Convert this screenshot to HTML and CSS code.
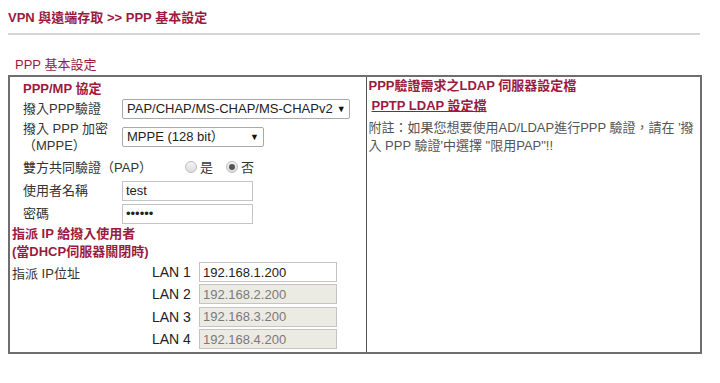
FILE: index.html
```html
<!DOCTYPE html>
<html lang="zh-TW">
<head>
  <meta charset="UTF-8">
  <title>PPP 基本設定</title>
  <link rel="stylesheet" href="styles.css">
</head>
<body>
  <div class="crumb">VPN 與遠端存取 &gt;&gt; PPP 基本設定</div>

  <div class="section-title">PPP 基本設定</div>

  <table class="panel">
    <tr>
      <td class="col-left">
        <div class="sub-title">PPP/MP 協定</div>
        <table class="form">
          <tr class="row-select">
            <td class="label">撥入PPP驗證</td>
            <td><div class="select select-wide">PAP/CHAP/MS-CHAP/MS-CHAPv2<span class="arrow">▼</span></div></td>
          </tr>
          <tr class="row-tall">
            <td class="label">撥入 PPP 加密<br>（MPPE）</td>
            <td><div class="select select-short">MPPE (128 bit）<span class="arrow">▼</span></div></td>
          </tr>
          <tr class="row-radio">
            <td class="label" colspan="2">
              <div class="radio-line">
                <span class="radio-label">雙方共同驗證（PAP）</span>
                <span class="radio"></span><span class="radio-text">是</span>
                <span class="radio checked"></span><span class="radio-text">否</span>
              </div>
            </td>
          </tr>
          <tr class="row-input">
            <td class="label">使用者名稱</td>
            <td><input class="text-input" type="text" value="test"></td>
          </tr>
          <tr class="row-input">
            <td class="label">密碼</td>
            <td><input class="text-input" type="password" value="123456"></td>
          </tr>
        </table>

        <div class="assign-title">指派 IP 給撥入使用者<br>(當DHCP伺服器關閉時)</div>

        <table class="lan">
          <tr>
            <td class="lan-label">指派 IP位址</td>
            <td class="lan-name">LAN 1</td>
            <td><input class="ip-input" type="text" value="192.168.1.200"></td>
          </tr>
          <tr>
            <td></td>
            <td class="lan-name">LAN 2</td>
            <td><input class="ip-input" type="text" value="192.168.2.200" disabled></td>
          </tr>
          <tr>
            <td></td>
            <td class="lan-name">LAN 3</td>
            <td><input class="ip-input" type="text" value="192.168.3.200" disabled></td>
          </tr>
          <tr>
            <td></td>
            <td class="lan-name">LAN 4</td>
            <td><input class="ip-input" type="text" value="192.168.4.200" disabled></td>
          </tr>
        </table>
      </td>
      <td class="col-right">
        <div class="ldap-title">PPP驗證需求之LDAP 伺服器設定檔</div>
        <a class="ldap-link" href="#">PPTP LDAP 設定檔</a>
        <p class="note">附註：如果您想要使用AD/LDAP進行PPP 驗證，請在 '撥入 PPP 驗證'中選擇 "限用PAP"!!</p>
      </td>
    </tr>
  </table>
</body>
</html>
```

FILE: styles.css
```css
* {
  margin: 0;
  padding: 0;
  box-sizing: border-box;
}

body {
  font-family: "Liberation Sans", "Noto Sans CJK TC", sans-serif;
  font-size: 13px;
  color: #333;
  background-color: #fff;
  padding: 0 8px;
}

.crumb {
  color: #9b1b3f;
  font-weight: bold;
  line-height: 18px;
  padding-top: 9px;
  padding-bottom: 6px;
  border-bottom: 2px solid #d6d6d6;
  margin-right: 12px;
}

.section-title {
  color: #9b1b3f;
  line-height: 16px;
  padding: 22px 0 2px 7px;
}

/* 外框表格 */
.panel {
  width: 694px;
  border-collapse: collapse;
  border: 2px solid #6e6e6e;
}

.panel td {
  vertical-align: top;
}

.col-left {
  width: 357px;
  border-right: 1px solid #555;
  padding-bottom: 2px;
}

.col-right {
  padding: 0 4px 0 2px;
}

.sub-title {
  color: #9b1b3f;
  font-weight: bold;
  line-height: 18px;
  padding: 3px 0 0 13px;
}

.form {
  border-collapse: collapse;
}

.form td {
  vertical-align: middle;
}

.form .label {
  width: 112px;
  padding-left: 13px;
  line-height: 17px;
}

.row-select td {
  height: 21px;
}

.row-tall td {
  height: 36px;
}

.row-radio td {
  height: 24px;
}

.row-input td {
  height: 23px;
}

.select {
  display: flex;
  align-items: center;
  justify-content: space-between;
  height: 20px;
  border: 1px solid #a9a9a9;
  border-radius: 2px;
  background-color: #fff;
  color: #222;
  padding: 0 4px;
  line-height: 18px;
  white-space: nowrap;
}

.select-wide {
  width: 228px;
}

.select-short {
  width: 142px;
}

.arrow {
  font-size: 9px;
  margin-left: 4px;
  color: #111;
}

.radio-line {
  display: flex;
  align-items: center;
}

.radio-label {
  width: 162px;
}

.radio {
  width: 12px;
  height: 12px;
  border-radius: 50%;
  border: 1px solid #bdbdbd;
  background: linear-gradient(#f4f4f4, #dcdcdc);
  position: relative;
  margin-right: 3px;
}

.radio.checked::after {
  content: "";
  position: absolute;
  left: 2px;
  top: 2px;
  width: 6px;
  height: 6px;
  border-radius: 50%;
  background-color: #555;
}

.radio-text {
  margin-right: 13px;
}

.text-input {
  width: 131px;
  height: 20px;
  border: 1px solid #c4c4c4;
  font-family: "Liberation Sans", sans-serif;
  font-size: 13px;
  color: #222;
  padding: 0 3px;
  outline: none;
}

.assign-title {
  color: #9b1b3f;
  font-weight: bold;
  line-height: 18px;
  padding: 0 0 0 2px;
}

.lan {
  border-collapse: collapse;
}

.lan td {
  height: 22.3px;
  vertical-align: middle;
}

.lan-label {
  width: 142px;
  padding-left: 2px;
}

.lan-name {
  width: 47px;
  color: #222;
  font-size: 14px;
}

.ip-input {
  width: 138px;
  height: 20px;
  border: 1px solid #c4c4c4;
  font-family: "Liberation Sans", sans-serif;
  font-size: 13px;
  color: #222;
  padding: 0 3px;
  background-color: #fff;
}

.ip-input:disabled {
  background-color: #ebebe4;
  color: #7a7a7a;
}

.ldap-title {
  color: #9b1b3f;
  font-weight: bold;
  line-height: 18px;
}

.ldap-link {
  display: inline-block;
  color: #9b1b3f;
  font-weight: bold;
  line-height: 18px;
  margin: 2px 0 0 3px;
}

.note {
  color: #555;
  line-height: 18px;
  margin-top: 4px;
  word-break: break-all;
}
```
